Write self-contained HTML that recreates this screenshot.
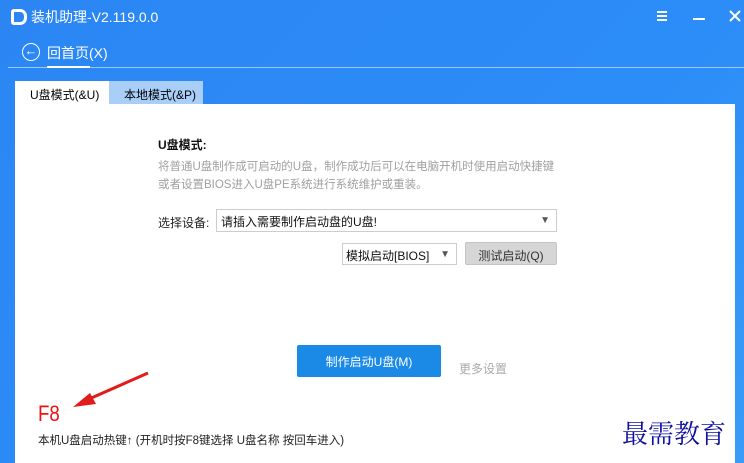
<!DOCTYPE html>
<html><head><meta charset="utf-8"><style>
*{margin:0;padding:0;box-sizing:border-box}
body{width:744px;height:463px;overflow:hidden;background:linear-gradient(135deg,#2b86f3,#2c8cf8 60%,#3a9cf7);font-family:"Liberation Sans","Noto Sans CJK SC",sans-serif;position:relative}
.a{position:absolute;white-space:nowrap}
</style></head><body>
<div class="a" style="left:11px;top:9px;width:16px;height:16px;border:3px solid #fff;border-radius:3px 7px 7px 3px"></div>
<div class="a" style="left:31px;top:7px;color:#fff;font-size:14px">装机助理-V2.119.0.0</div>
<div class="a" style="left:657px;top:11px;width:10px;height:2px;background:#fff;box-shadow:0 4px #fff,0 8px #fff"></div>
<div class="a" style="left:693px;top:18px;width:12px;height:2px;background:#fff"></div>
<svg class="a" style="left:729px;top:10px" width="12" height="12"><path d="M1 1L11 11M11 1L1 11" stroke="#fff" stroke-width="2"/></svg>
<div class="a" style="left:22px;top:43px;width:18px;height:18px;border:1.5px solid #fff;border-radius:50%;color:#fff;font-size:13px;line-height:14px;text-align:center">←</div>
<div class="a" style="left:47px;top:43px;color:#fff;font-size:14px">回首页(X)</div>
<div class="a" style="left:8px;top:67px;width:736px;height:1px;background:#9cc9fb"></div>
<div class="a" style="left:47px;top:66px;width:43px;height:2px;background:#fff"></div>
<div class="a" style="left:15px;top:81px;width:94px;height:24px;background:#fff;font-size:12px;padding:5px 0 0 15px">U盘模式(&amp;U)</div>
<div class="a" style="left:109px;top:81px;width:94px;height:23px;background:#a9cff9;font-size:12px;padding:5px 0 0 15px">本地模式(&amp;P)</div>
<div class="a" style="left:15px;top:104px;width:720px;height:359px;background:#fff"></div>
<div class="a" style="left:158px;top:136px;font-size:12px;font-weight:bold;color:#111">U盘模式:</div>
<div class="a" style="left:158px;top:158px;font-size:11.5px;color:#a0a0a0;line-height:18px">将普通U盘制作成可启动的U盘，制作成功后可以在电脑开机时使用启动快捷键<br>或者设置BIOS进入U盘PE系统进行系统维护或重装。</div>
<div class="a" style="left:158px;top:214px;font-size:12px;color:#222">选择设备:</div>
<div class="a" style="left:216px;top:209px;width:341px;height:23px;border:1px solid #ccc;font-size:12px;padding:3px 4px;color:#111">请插入需要制作启动盘的U盘!<span style="position:absolute;right:6px;top:5px;color:#555;font-size:10px">▼</span></div>
<div class="a" style="left:342px;top:243px;width:115px;height:22px;border:1px solid #ccc;font-size:12px;padding:3px 3px;color:#111">模拟启动[BIOS]<span style="position:absolute;right:6px;top:5px;color:#555;font-size:10px">▼</span></div>
<div class="a" style="left:465px;top:242px;width:92px;height:23px;background:#d6d6d6;border:1px solid #c4c4c4;border-radius:2px;font-size:12px;text-align:center;padding-top:4px;color:#333">测试启动(Q)</div>
<div class="a" style="left:297px;top:345px;width:144px;height:32px;background:#1b8ae6;border-radius:2px;color:#fff;font-size:12px;text-align:center;padding-top:8px">制作启动U盘(M)</div>
<div class="a" style="left:459px;top:360px;font-size:12px;color:#aaa">更多设置</div>
<svg class="a" style="left:60px;top:370px" width="95" height="40"><line x1="88" y1="3" x2="20" y2="33" stroke="#e21b1b" stroke-width="3"/><polygon points="13,37 30,23 36,34" fill="#e21b1b"/></svg>
<div class="a" style="left:38px;top:401px;font-size:22px;color:#f01010;transform:scaleX(0.85);transform-origin:left">F8</div>
<div class="a" style="left:38px;top:432px;font-size:11.5px;color:#222">本机U盘启动热键↑ (开机时按F8键选择 U盘名称 按回车进入)</div>
<div class="a" style="left:622px;top:414px;font-size:26px;color:#1010a0;font-family:'Noto Serif CJK SC',serif">最需教育</div>
</body></html>
